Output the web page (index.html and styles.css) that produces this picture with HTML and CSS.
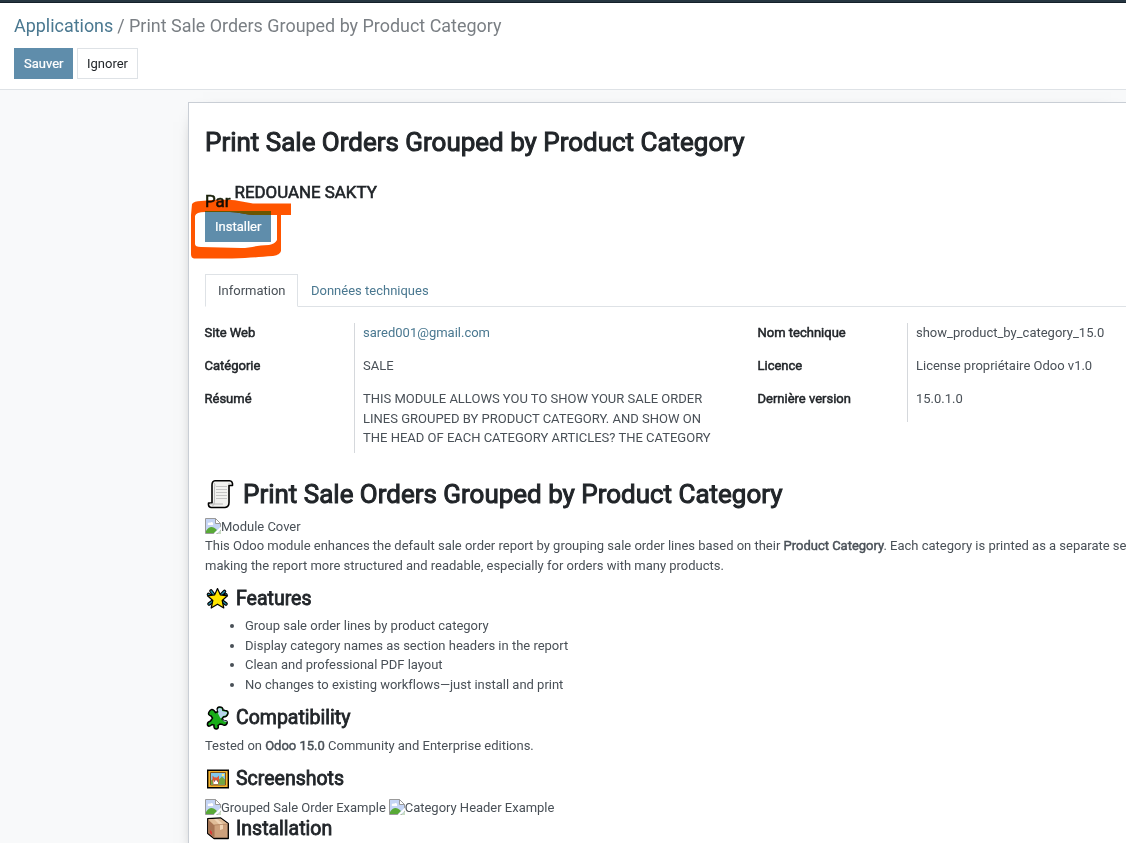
FILE: index.html
```html
<!DOCTYPE html>
<html lang="fr">
<head>
<meta charset="utf-8">
<title>Print Sale Orders Grouped by Product Category</title>
<link rel="stylesheet" href="styles.css">
</head>
<body>
<svg class="defs" width="0" height="0">
  <symbol id="broken" viewBox="0 0 16 16">
    <path d="M.5.5h10l5 5v10H.5z" fill="#c5d5f5" stroke="#9a9a9a"/>
    <path d="M3 7c-1-2 1-3 2-2 1-2 4-1 3 2z" fill="#fff"/>
    <path d="M1 15v-2c3-5 7-5 11-1l-3 3z" fill="#58a936"/>
    <path d="M10.500.5v5h5z" fill="#fff" stroke="#9a9a9a"/>
    <path d="M16 8.500 8.500 16H11l5-4.500z" fill="#fff"/>
    <path d="M12 16l4-4v4z" fill="#c8ddc2"/>
  </symbol>
</svg>
<div class="navbar"></div>
<header class="control-panel">
  <div class="breadcrumb"><a>Applications</a> <span>/ Print Sale Orders Grouped by Product Category</span></div>
  <div class="actions"><button class="btn primary">Sauver</button><button class="btn secondary">Ignorer</button></div>
</header>
<main class="content">
  <section class="sheet">
    <h1 class="title">Print Sale Orders Grouped by Product Category</h1>
    <div class="author"><span class="by">Par</span><span class="name">REDOUANE SAKTY</span></div>
    <div class="install">
      <button class="btn primary">Installer</button>
      <svg class="marker" width="104" height="62" viewBox="0 0 104 62">
        <path fill-rule="evenodd" fill="#ff5500" d="M3 5Q5 2 12 2C26 1 38 0 50 2L64 4.500H102V16H92V52Q91 56 84 57C70 58 60 59 43 59.500H5Q2 59 2 55V16ZM16 13Q7 13 6 17V45Q6 48 12 48L52 49C62 49 68 46 80 46Q86 45 88 41V16H66C57 16 50 13 41 13Z"/>
      </svg>
      <svg class="overlap" width="66" height="5" viewBox="0 0 66 5"><path d="M0 0h66v4H50C40 4 35 1 25 1H0z" fill="#6b5500"/></svg>
    </div>
    <nav class="tabs"><span class="tab active">Information</span><span class="tab">Données techniques</span></nav>
    <div class="groups">
      <dl class="group">
        <dt>Site Web</dt><dd><a>sared001@gmail.com</a></dd>
        <dt>Catégorie</dt><dd>SALE</dd>
        <dt>Résumé</dt><dd class="last">THIS MODULE ALLOWS YOU TO SHOW YOUR SALE ORDER<br>LINES GROUPED BY PRODUCT CATEGORY. AND SHOW ON<br>THE HEAD OF EACH CATEGORY ARTICLES? THE CATEGORY</dd>
      </dl>
      <dl class="group">
        <dt>Nom technique</dt><dd>show_product_by_category_15.0</dd>
        <dt>Licence</dt><dd>License propriétaire Odoo v1.0</dd>
        <dt>Dernière version</dt><dd>15.0.1.0</dd>
      </dl>
    </div>
    <article class="description">
      <h1 class="heading big">
        <svg width="30" height="32" viewBox="0 0 30 32"><path d="M10 1.800h14.500q3.500.2 3 4.700h-3.500v17q0 4.500-4 5H6q-3-.5-2.500-4.500H7V6q0-4 3-4.200z" fill="#f1f1ef" stroke="#000" stroke-width="1.600" stroke-linejoin="round"/><path d="M9 4q1.500 1 .5 5v13q0 4-2 5M24 6V4M5 25h13" fill="none" stroke="#bbb"/><path d="M11 7.500h11M11 10.500h11M11 13.500h11M11 16.500h11M11 19.500h11" stroke="#c4c4c4"/></svg>
        <span>Print Sale Orders Grouped by Product Category</span>
      </h1>
      <div class="images"><span class="image"><svg width="16" height="16"><use href="#broken"/></svg>Module Cover</span></div>
      <p>This Odoo module enhances the default sale order report by grouping sale order lines based on their <b>Product Category</b>. Each category is printed as a separate se<br>making the report more structured and readable, especially for orders with many products.</p>
      <h2 class="heading features">
        <svg width="24" height="24" viewBox="0 0 24 24"><path d="M6 4l3 4M19.500 4.500l-4 4M3.500 7.500l3 2M21 8l-3 2M4 17l4-3M21 17l-4-3" stroke="#000" stroke-width="3.600" stroke-linecap="round"/><path d="M6 4l3 4M19.500 4.500l-4 4M3.500 7.500l3 2M21 8l-3 2M4 17l4-3M21 17l-4-3" stroke="#258ba8" stroke-width="1.500" stroke-linecap="round"/><path d="M12.500 1.500l2.800 6.300 7.200 1-5.300 4.700 1.600 7.500-6.300-3.800-6.300 3.800 1.600-7.500L2.500 8.800l7.200-1z" fill="#ffe600" stroke="#000" stroke-width="1.200" stroke-linejoin="round"/></svg>
        <span>Features</span>
      </h2>
      <ul>
        <li>Group sale order lines by product category</li>
        <li>Display category names as section headers in the report</li>
        <li>Clean and professional PDF layout</li>
        <li>No changes to existing workflows—just install and print</li>
      </ul>
      <h2 class="heading compat">
        <svg width="24" height="24" viewBox="0 0 24 24"><path d="M4 6q2-4 5-1.500l1.500 2L13 5.500q-2-3.500 1-4.500 4-.5 4 3l2 .5q3.500 0 3 3-1 3.500-4.500 3.500l-1.500 2 2 1.500q4 0 3 3-2 3-4.500 1l-2.500-.5-2 1.500q1 3-1.500 3.500-3 0-2.500-4l-2-.5q-3 3-4.500.5-.5-3 3-4L7.500 12 6 10Q2.500 9 4 6z" fill="#19ad19" stroke="#000" stroke-width="1.500"/><path d="M13.500 6q-2-3.500 1-4 3 0 2.500 3l2.500.5q3 0 2.500 2-1 2.500-4 2.500l-2 2.500 2.500 2q3-.5 3.500 1.500l-3-.5-4-4-2-4z" fill="#b9d5ed"/></svg>
        <span>Compatibility</span>
      </h2>
      <p>Tested on <b>Odoo 15.0</b> Community and Enterprise editions.</p>
      <h2 class="heading shots">
        <svg width="24" height="24" viewBox="0 0 24 24"><path d="M2.700 3.200h20.600v17.600H2.700z" fill="#f5b52c" stroke="#000" stroke-width="1.400"/><path d="M5.500 5.500h15v12.500h-15z" fill="#82caef" stroke="#80531c"/><path d="M6 13.500l4-3 4 2 3-3 3 3v5H6z" fill="#74a740"/><path d="M7.500 8.500l2 2h2.500l2-2v6l-1 3H8.500l-1-3z" fill="#df5636"/><path d="M8.500 13.500h4.500v3.500H8.500z" fill="#fff"/><path d="M9 14h1M12 14h1" stroke="#222"/><circle cx="18" cy="8" r="1.300" fill="#ffed75"/></svg>
        <span>Screenshots</span>
      </h2>
      <div class="images pair"><span class="image"><svg width="16" height="16"><use href="#broken"/></svg>Grouped Sale Order Example</span><span class="image"><svg width="16" height="16"><use href="#broken"/></svg>Category Header Example</span></div>
      <h2 class="heading setup">
        <svg width="24" height="24" viewBox="0 0 24 24"><path d="M2.700 1.700l13-.7 7.600 5.500v15H9l-6.300-5z" fill="#cda17c" stroke="#000" stroke-width="1.300" stroke-linejoin="round"/><path d="M3.200 3l6 5v13l-6-5z" fill="#a77554"/><path d="M3.200 2.200l12.300-.7 7.300 5.500-13.600 1z" fill="#e0bd98"/><path d="M9 2l6 6v5l3-1V7l-6-5z" fill="#f0d5b6"/><path d="M9.200 8v13M9.200 8l13.500-1" stroke="#aa7b57" stroke-width=".7"/><path d="M5 13l2 2v3l-2-2z" fill="#e23535"/></svg>
        <span>Installation</span>
      </h2>
    </article>
  </section>
</main>
</body>
</html>
```

FILE: styles.css
```css
* { box-sizing: border-box; }
body { margin: 0; height: 843px; overflow: hidden; background: #f8f9fa; color: #495057; font: 13px/19.5px Roboto, sans-serif; }
h1, h2, p, dl, dd, ul { margin: 0; }
a { color: #4a7890; }
.defs { position: absolute; }
.navbar { height: 3px; background: #263641; border-bottom: 1px solid #15212b; }
.control-panel { height: 87px; padding: 9px 14px 10px; background: #fff; border-bottom: 1px solid #dee2e6; }
.breadcrumb { height: 36px; font-size: 17.93px; line-height: 27px; color: #7a7f84; white-space: nowrap; }
.breadcrumb span { margin-left: -.5px; }
.actions { display: flex; gap: 4px; }
.btn { height: 31px; padding: 0 9px; border: 1px solid #dee2e6; font: 13px/19.5px Roboto, sans-serif; background: #fff; color: #212529; }
.btn.secondary { width: 61px; padding: 0 9px 0 8px; }
.btn.primary { background: #5f8dab; border-color: #5f8dab; color: #fff; -webkit-text-stroke: .2px; }
.content { padding: 12px 0 0 188px; }
.sheet { height: 760px; padding: 24px 0 24px 16px; background: #fff; border: 1px solid #c9ced5; border-right: 0; box-shadow: 0 5px 20px -15px #000; }
.title, .big, .heading, .author, dt, b { font-weight: 400; color: #212529; -webkit-text-stroke: .8px; }
.title, .heading.big { font-size: 25.98px; line-height: 31px; white-space: nowrap; -webkit-text-stroke: 1px; }
.author { display: flex; align-items: flex-start; gap: 4px; height: 53px; padding-top: 23px; font-size: 16.9px; line-height: 22px; -webkit-text-stroke: .6px; }
.by { padding-top: 9px; color: #18200a; }
.install { position: relative; height: 63px; }
.install .btn { display: block; }
.marker { position: absolute; left: -16px; top: -12px; mix-blend-mode: multiply; }
.overlap { position: absolute; left: 0; top: 0; }
.tabs { display: flex; height: 33px; border-bottom: 1px solid #dee2e6; }
.tab { padding: 7px 13px; color: #4a7890; }
.tab.active { width: 93px; padding: 6px 12px; height: 33px; background: #fff; color: #495057; border: 1px solid #dee2e6; border-bottom-color: #fff; }
.groups { display: grid; grid-template-columns: 553px 1fr; align-items: start; padding-top: 16px; height: 168px; }
.group { display: grid; grid-template-columns: 149px 1fr; }
dt { height: 33px; margin-left: -.5px; -webkit-text-stroke: .5px; }
dd { min-height: 33px; padding: 0 0 13px 8px; border-left: 1px solid #d5d8dc; white-space: nowrap; }
dd.last { height: 64px; padding-bottom: 0; }
.description { white-space: nowrap; }
.description p, .description li { letter-spacing: -.007px; }
.heading { display: flex; align-items: center; }
.heading svg { flex: none; }
.heading.big { height: 39px; gap: 8px; }
h2.heading { font-size: 19.5px; line-height: 24px; gap: 7px; }
.images { display: flex; gap: 3px; height: 22px; padding-top: 3px; }
.image { display: flex; letter-spacing: -.02px; }
.image svg { margin-top: 1px; }
b { color: #495057; -webkit-text-stroke: .45px; }
.features { margin-top: 12px; }
ul { padding: 5px 0 0 40px; }
.compat { margin-top: 12px; }
.compat + p { margin-top: 6px; }
.shots { margin-top: 11px; }
.pair { height: 20px; margin-top: 7px; padding-top: 0; }
.setup { margin-top: -1px; }
```
